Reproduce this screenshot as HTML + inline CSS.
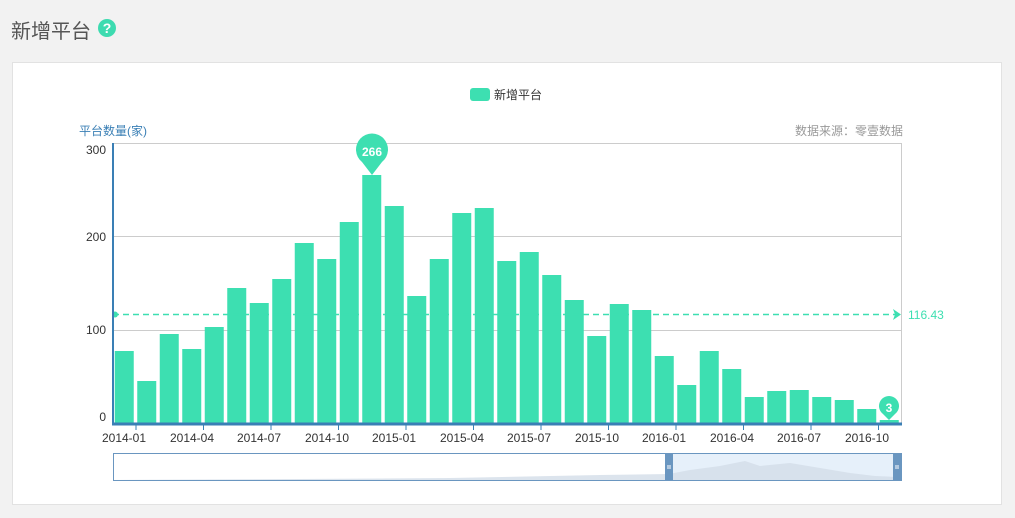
<!DOCTYPE html>
<html><head><meta charset="utf-8"><style>
body{margin:0;background:#f2f2f2;width:1015px;height:518px;overflow:hidden;font-family:"Liberation Sans","Noto Sans CJK SC",sans-serif}
.title{position:absolute;left:11px;top:15px;font-size:20px;color:#555}
.q{position:absolute;left:98px;top:19px;width:18px;height:18px;border-radius:50%;background:#3ddbb0;color:#fff;font-size:14px;font-weight:bold;text-align:center;line-height:18px}
.card{position:absolute;left:12px;top:62px;width:988px;height:441px;background:#fff;border:1px solid #e2e2e2}
svg{position:absolute;left:0;top:0}
</style></head><body>
<div class="title">新增平台</div><div class="q">?</div>
<div class="card"></div>
<svg width="1015" height="518" font-family="Liberation Sans, Noto Sans CJK SC, sans-serif">
<rect x="470" y="88" width="20" height="13" rx="3" fill="#3ddfb1"/>
<text x="494" y="99" font-size="12" fill="#333">新增平台</text>
<text x="79" y="135" font-size="12" fill="#3a7fb5">平台数量(家)</text>
<text x="903" y="135" font-size="12" fill="#999" text-anchor="end">数据来源：零壹数据</text>
<g stroke="#ccc" stroke-width="1">
<line x1="113" y1="143.5" x2="901" y2="143.5"/><line x1="113" y1="236.5" x2="901" y2="236.5"/><line x1="113" y1="330.5" x2="901" y2="330.5"/><line x1="901.5" y1="143" x2="901.5" y2="423"/>
</g>
<g font-size="12" fill="#333" text-anchor="end">
<text x="106" y="154">300</text><text x="106" y="241">200</text><text x="106" y="334">100</text><text x="106" y="421">0</text>
</g>
<g fill="#3ddfb1">
<rect x="114.75" y="351" width="19" height="72"/>
<rect x="137.25" y="381" width="19" height="42"/>
<rect x="159.75" y="334" width="19" height="89"/>
<rect x="182.25" y="349" width="19" height="74"/>
<rect x="204.75" y="327" width="19" height="96"/>
<rect x="227.25" y="288" width="19" height="135"/>
<rect x="249.75" y="303" width="19" height="120"/>
<rect x="272.25" y="279" width="19" height="144"/>
<rect x="294.75" y="243" width="19" height="180"/>
<rect x="317.25" y="259" width="19" height="164"/>
<rect x="339.75" y="222" width="19" height="201"/>
<rect x="362.25" y="175" width="19" height="248"/>
<rect x="384.75" y="206" width="19" height="217"/>
<rect x="407.25" y="296" width="19" height="127"/>
<rect x="429.75" y="259" width="19" height="164"/>
<rect x="452.25" y="213" width="19" height="210"/>
<rect x="474.75" y="208" width="19" height="215"/>
<rect x="497.25" y="261" width="19" height="162"/>
<rect x="519.75" y="252" width="19" height="171"/>
<rect x="542.25" y="275" width="19" height="148"/>
<rect x="564.75" y="300" width="19" height="123"/>
<rect x="587.25" y="336" width="19" height="87"/>
<rect x="609.75" y="304" width="19" height="119"/>
<rect x="632.25" y="310" width="19" height="113"/>
<rect x="654.75" y="356" width="19" height="67"/>
<rect x="677.25" y="385" width="19" height="38"/>
<rect x="699.75" y="351" width="19" height="72"/>
<rect x="722.25" y="369" width="19" height="54"/>
<rect x="744.75" y="397" width="19" height="26"/>
<rect x="767.25" y="391" width="19" height="32"/>
<rect x="789.75" y="390" width="19" height="33"/>
<rect x="812.25" y="397" width="19" height="26"/>
<rect x="834.75" y="400" width="19" height="23"/>
<rect x="857.25" y="409" width="19" height="14"/>
<rect x="879.75" y="420" width="19" height="3"/>
</g>
<line x1="113" y1="314.5" x2="898" y2="314.5" stroke="#3ddfb1" stroke-width="1.5" stroke-dasharray="6,4"/>
<circle cx="115" cy="314.5" r="3" fill="#3ddfb1"/>
<path d="M893 309 L901 314.5 L893 320 L895 314.5Z" fill="#3ddfb1"/>
<text x="908" y="319" font-size="12" fill="#3ddfb1">116.43</text>
<path d="M372 175 L362 162 A16 16 0 1 1 382 162 Z" fill="#3ddfb1"/>
<text x="372" y="156" font-size="12" font-weight="bold" fill="#fff" text-anchor="middle">266</text>
<path d="M889 420 L883 414 A10 10 0 1 1 895 414 Z" fill="#3ddfb1"/>
<text x="889" y="412" font-size="12" font-weight="bold" fill="#fff" text-anchor="middle">3</text>
<line x1="113" y1="143" x2="113" y2="425" stroke="#3a7fb5" stroke-width="2"/>
<line x1="112" y1="424" x2="902" y2="424" stroke="#3a7fb5" stroke-width="3"/>
<g stroke="#3a7fb5" stroke-width="1">
<line x1="136" y1="425" x2="136" y2="430"/><line x1="203.5" y1="425" x2="203.5" y2="430"/><line x1="271" y1="425" x2="271" y2="430"/><line x1="338.5" y1="425" x2="338.5" y2="430"/><line x1="406" y1="425" x2="406" y2="430"/><line x1="473.5" y1="425" x2="473.5" y2="430"/><line x1="541" y1="425" x2="541" y2="430"/><line x1="608.5" y1="425" x2="608.5" y2="430"/><line x1="676" y1="425" x2="676" y2="430"/><line x1="743.5" y1="425" x2="743.5" y2="430"/><line x1="811" y1="425" x2="811" y2="430"/><line x1="878.5" y1="425" x2="878.5" y2="430"/>
</g>
<g font-size="12" fill="#333" text-anchor="middle">
<text x="124" y="442">2014-01</text><text x="192" y="442">2014-04</text><text x="259" y="442">2014-07</text><text x="327" y="442">2014-10</text><text x="394" y="442">2015-01</text><text x="462" y="442">2015-04</text><text x="529" y="442">2015-07</text><text x="597" y="442">2015-10</text><text x="664" y="442">2016-01</text><text x="732" y="442">2016-04</text><text x="799" y="442">2016-07</text><text x="867" y="442">2016-10</text>
</g>
<rect x="113.5" y="453.5" width="788" height="27" fill="#fff" stroke="#6a96c0"/>
<rect x="669" y="454" width="228" height="26" fill="#e6f0fa"/>
<path d="M113 480 L300 479 L450 478 L600 475 L669 474 L690 470 L720 466 L745 461 L760 466 L790 463 L820 468 L850 473 L875 476 L897 477 L897 480 Z" fill="#d3dde8" opacity="0.8"/>
<rect x="665" y="453" width="8" height="28" fill="#6a96c0"/>
<rect x="893" y="453" width="8" height="28" fill="#6a96c0"/>
<g stroke="#fff" stroke-width="1"><line x1="667" y1="466" x2="671" y2="466"/><line x1="667" y1="468" x2="671" y2="468"/><line x1="895" y1="466" x2="899" y2="466"/><line x1="895" y1="468" x2="899" y2="468"/></g>
</svg>
</body></html>
